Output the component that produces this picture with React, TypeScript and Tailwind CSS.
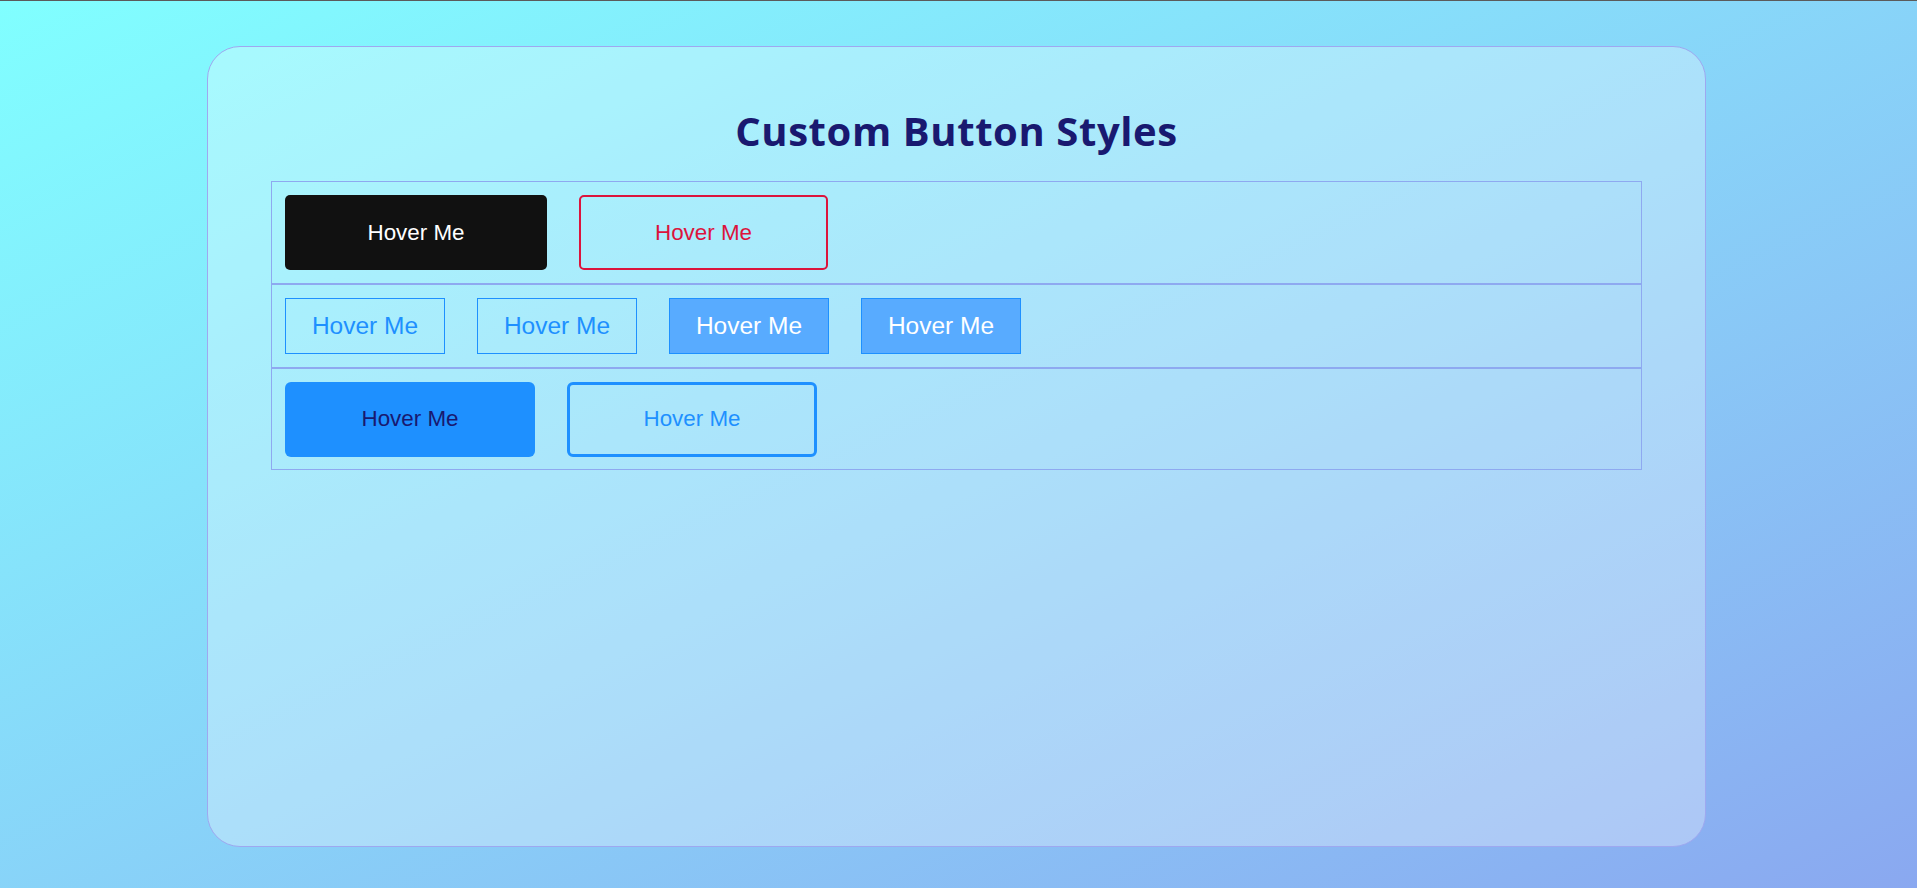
import React from 'react';

const ROW = 'flex items-center gap-8 border border-[#8ea9f0] pl-[13px]';

export default function App() {
  return (
    <div className="min-h-[888px] border-t border-[#5b5b5b] bg-gradient-to-br from-[#80ffff] to-[#8aa8f0] pt-[45px] font-['Liberation_Sans',Arial,sans-serif]">
      <div className="ml-[207px] h-[801px] w-[1499px] rounded-[33px] border border-[#9ea8f0] bg-white/30 px-[63px] pt-[57px]">
        <h1 className="mb-[23px] text-center font-['Open_Sans',sans-serif] text-[40px] leading-[54px] font-bold tracking-[0.6px] text-[#191970]">
          Custom Button Styles
        </h1>

        <div className="flex flex-col">
          {/* Row 1 */}
          <div className={`${ROW} py-[13px]`}>
            <button className="h-[75px] w-[262px] rounded-[5px] bg-[#111111] text-[22.4px] text-white">
              Hover Me
            </button>
            <button className="h-[75px] w-[249px] rounded-[5px] border-2 border-[#dc143c] text-[22.4px] text-[#dc143c]">
              Hover Me
            </button>
          </div>

          {/* Row 2 */}
          <div className={`${ROW} py-[13px]`}>
            <button className="h-[56px] w-[160px] border border-[#1e90ff] text-[24.5px] text-[#1e90ff]">
              Hover Me
            </button>
            <button className="h-[56px] w-[160px] border border-[#1e90ff] text-[24.5px] text-[#1e90ff]">
              Hover Me
            </button>
            <button className="h-[56px] w-[160px] border border-[#1e90ff] bg-[#58abff] text-[24.5px] text-white">
              Hover Me
            </button>
            <button className="h-[56px] w-[160px] border border-[#1e90ff] bg-[#58abff] text-[24.5px] text-white">
              Hover Me
            </button>
          </div>

          {/* Row 3 */}
          <div className={`${ROW} py-[12.5px]`}>
            <button className="h-[75px] w-[250px] rounded-[6px] bg-[#1e90ff] text-[22.4px] text-[#191970]">
              Hover Me
            </button>
            <button className="h-[75px] w-[250px] rounded-[6px] border-[3px] border-[#1e90ff] text-[22.4px] text-[#1e90ff]">
              Hover Me
            </button>
          </div>
        </div>
      </div>
    </div>
  );
}
